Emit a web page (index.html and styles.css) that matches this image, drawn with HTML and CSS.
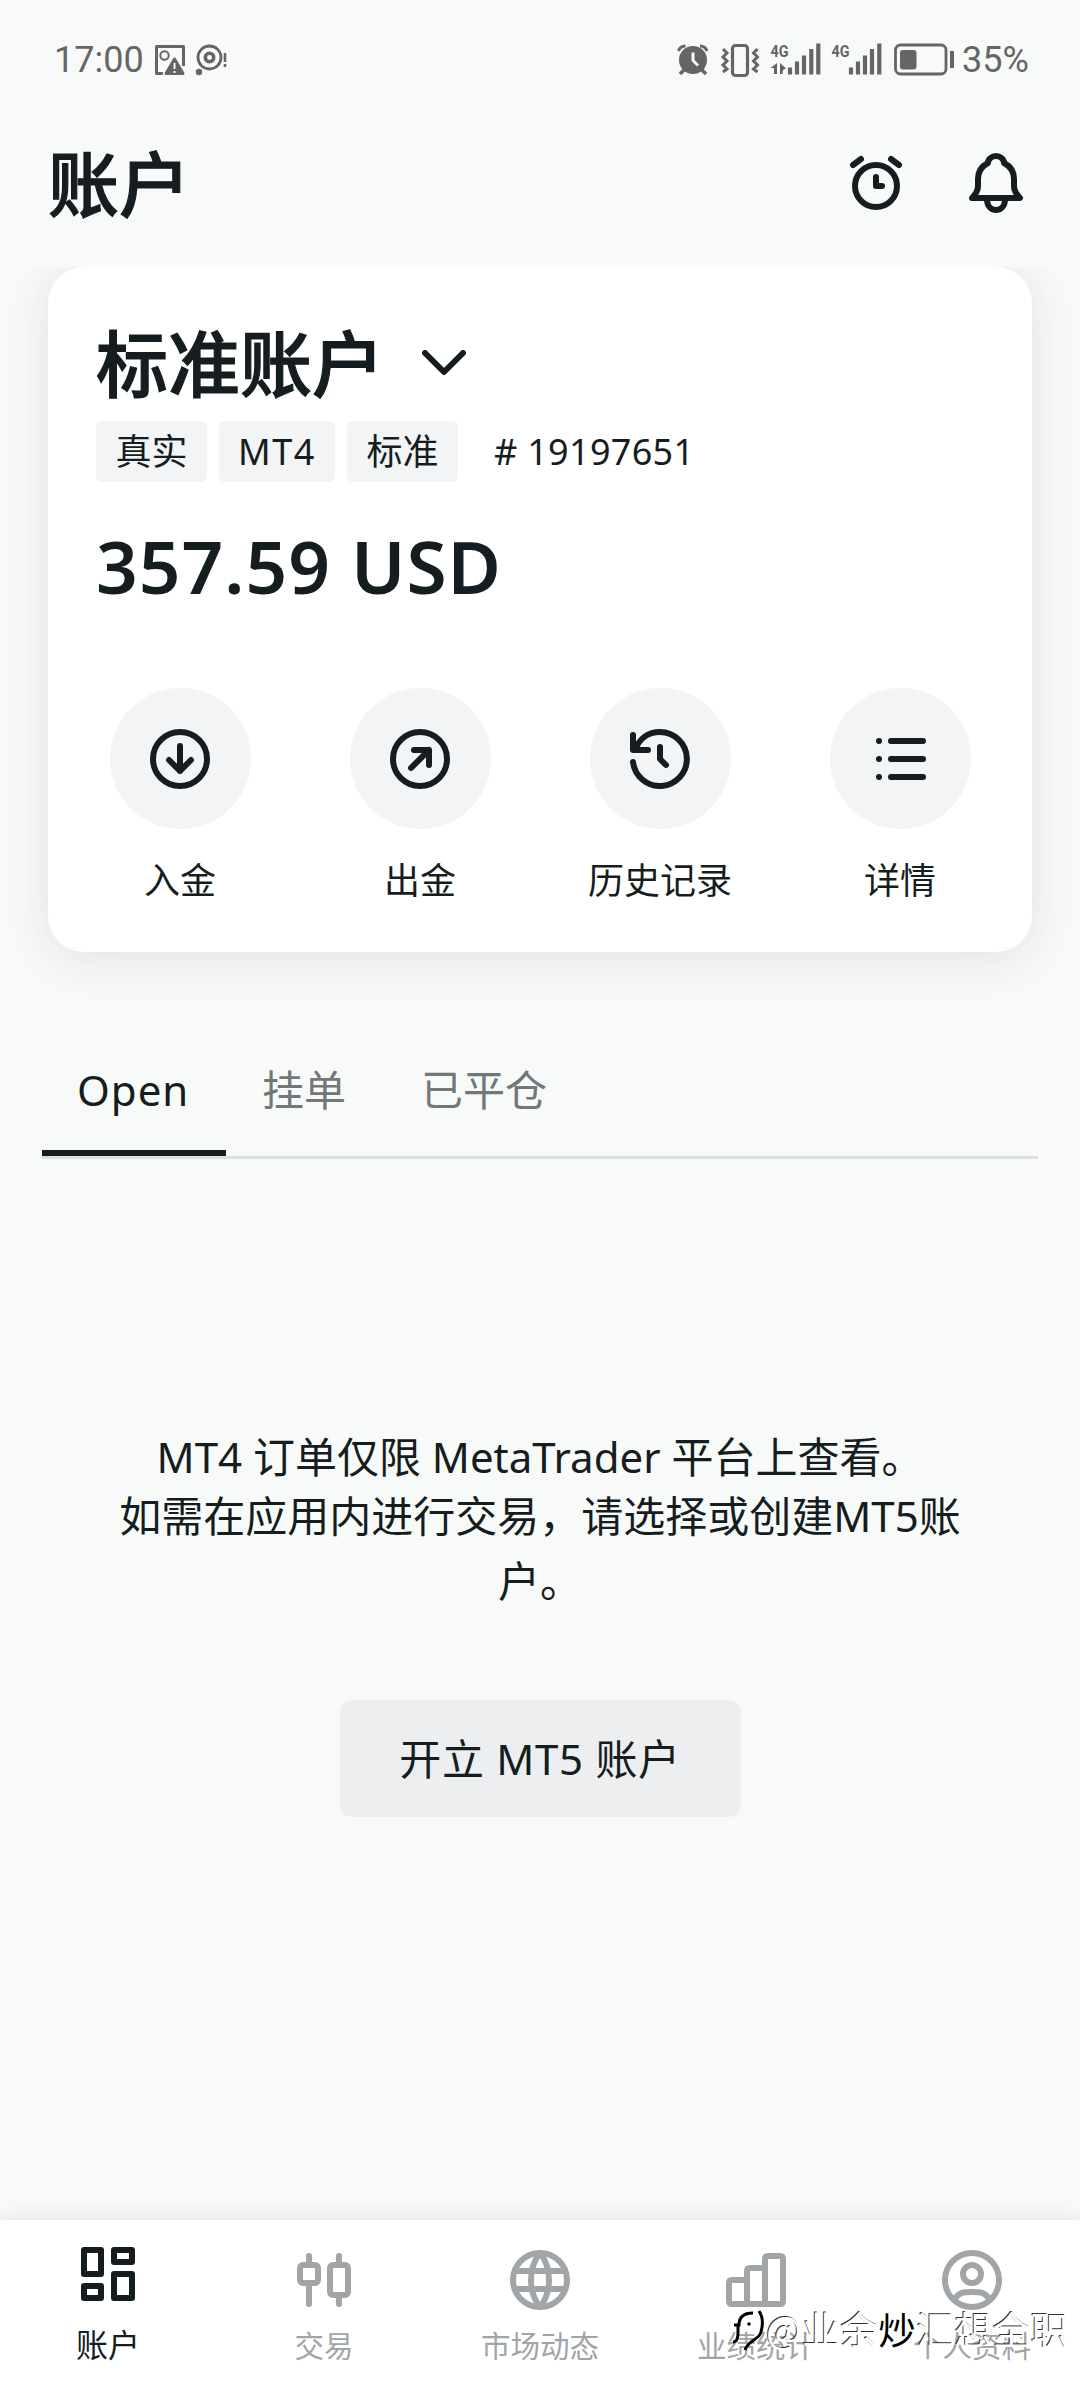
FILE: index.html
```html
<!DOCTYPE html>
<html lang="zh-CN">
<head>
<meta charset="utf-8">
<title>账户</title>
<link rel="stylesheet" href="styles.css">
</head>
<body>
<div class="app">
  <div class="status">
    <span class="time">17:00</span>
    <svg class="st-notes" width="76" height="32" viewBox="0 0 76 32">
      <path d="M7 29.500H2.500V2.500h27V22M9 29.500H7" fill="none" stroke="#646564" stroke-width="3" stroke-linejoin="round"/>
      <circle cx="10.500" cy="11.500" r="4.200" fill="none" stroke="#646564" stroke-width="2"/>
      <path d="M20.500 14.500L29 29.500H12Z" fill="#646564" stroke="#f8faf9" stroke-width="5"/>
      <path d="M20.500 15L29 29.500H12Z" fill="#646564" stroke="#646564" stroke-width="3" stroke-linejoin="round"/>
      <path d="M20.500 19v6M20.500 27v2" stroke="#f8faf9" stroke-width="2"/>
      <circle cx="55.500" cy="13.500" r="11.500" fill="none" stroke="#646564" stroke-width="2.800"/>
      <circle cx="55.500" cy="13.500" r="4.200" fill="none" stroke="#646564" stroke-width="3.600"/>
      <circle cx="45" cy="28" r="3.200" fill="#646564"/>
      <path d="M71 9v9M71 20v3" stroke="#646564" stroke-width="2.600"/>
    </svg>
    <svg class="st-system" width="280" height="36" viewBox="676 42 280 36">
      <g fill="none" stroke="#646564">
        <circle cx="693" cy="60" r="14" fill="#646564" stroke="none"/>
        <path d="M678.500 51c1-3 4-5 7-5M707 51c-1-3-4-5-7-5" stroke-width="3"/>
        <path d="M684 70l-4 4M702 70l4 4" stroke-width="3.500"/>
        <path d="M693 52.500v8l5 5" stroke="#f8faf9" stroke-width="3"/>
        <rect x="732.500" y="45.500" width="15" height="30" rx="3" stroke-width="3.200"/>
        <path d="M723 49l4 4-4 4 4 4-4 4 4 4-4 3M757.500 49l-4 4 4 4-4 4 4 4-4 4 4 3" stroke-width="3"/>
        <path d="M790 67.500v7M797 61.500v13M804 55.500v19M811.300 49v25.500M818.300 43.500v31M851 67.500v7M858 61.500v13M865 55.500v19M872 49v25.500M879.300 43.500v31" stroke-width="4.200"/>
        <rect x="895.500" y="45" width="50.500" height="29" rx="5" stroke-width="2.800"/>
        <path d="M952 51v17" stroke-width="4"/>
      </g>
      <path d="M777 63v11h-3v-6h-3.500zM780 63l6 5.500-3 1.500-.5 4H780z" fill="#646564"/>
      <rect x="900" y="50" width="16.500" height="19.500" rx="3" fill="#646564"/>
      <text x="770.500" y="57" class="net" textLength="18" lengthAdjust="spacingAndGlyphs">4G</text>
      <text x="831.500" y="57" class="net" textLength="18" lengthAdjust="spacingAndGlyphs">4G</text>
    </svg>
    <span class="pct">35%</span>
  </div>

  <header class="header">
    <h1>账户</h1>
    <svg class="ico" width="60" height="60" viewBox="0 0 60 60"><circle cx="30" cy="33" r="21"/><path d="M30 24v9h6M7 12l8-6M53 12l-8-6"/></svg>
    <svg class="ico" width="60" height="60" viewBox="0 0 60 60"><path d="M6 45c4-4 6-7 6-12V26c0-8 4-13 10-16 0-4 4-7 8-7s8 3 8 7c6 3 10 8 10 16v7c0 5 2 8 6 12zM21 46c0 7 4 11 9 11s9-4 9-11"/></svg>
  </header>

  <div class="card-zone">
    <section class="card">
      <div class="name"><h2>标准账户</h2><svg class="ico" width="44" height="26" viewBox="0 0 44 26"><path d="M3 3l19 19L41 3"/></svg></div>
      <div class="tags"><span class="tag">真实</span><span class="tag mt">MT4</span><span class="tag">标准</span><span class="num"># 19197651</span></div>
      <div class="amount">357.59 USD</div>
      <div class="actions">
        <div class="action"><i><svg class="ico" width="60" height="60" viewBox="0 0 60 60"><circle cx="30" cy="30" r="27"/><path d="M30 17v25M19 31l11 11 11-11"/></svg></i>入金</div>
        <div class="action"><i><svg class="ico" width="60" height="60" viewBox="0 0 60 60"><circle cx="30" cy="30" r="27"/><path d="M21 39l18-18M24 21h15v15"/></svg></i>出金</div>
        <div class="action"><i><svg class="ico" width="60" height="60" viewBox="0 0 60 60"><path d="M3 6v15h15M5 21C9 10 18 3 30 3a27 27 0 1 1-27 30M30 18v12l6 6"/></svg></i>历史记录</div>
        <div class="action"><i><svg class="ico" width="60" height="60" viewBox="0 0 60 60"><path d="M21 12h32M21 30h32M21 48h32M9 12h.01M9 30h.01M9 48h.01"/></svg></i>详情</div>
      </div>
    </section>
  </div>

  <nav class="tabs"><span class="tab on">Open</span><span class="tab">挂单</span><span class="tab">已平仓</span></nav>

  <main class="empty">
    <p class="l1">MT4 订单仅限 MetaTrader 平台上查看。</p>
    <p class="l2">如需在应用内进行交易，请选择或创建MT5账</p>
    <p class="l3">户。</p>
    <button class="open-btn">开立 MT5 账户</button>
  </main>

  <nav class="bottom">
    <div class="item on"><svg class="ico" width="60" height="60" viewBox="0 0 60 60"><rect x="6" y="6" width="17" height="24"/><rect x="36" y="6" width="18" height="12"/><rect x="6" y="42" width="17" height="12"/><rect x="36" y="30" width="18" height="24"/></svg>账户</div>
    <div class="item"><svg class="ico" width="60" height="60" viewBox="0 0 60 60"><rect x="6" y="15" width="18" height="18" rx="3"/><rect x="36" y="15" width="18" height="30" rx="3"/><path d="M15 6v9M15 33v21M45 6v9M45 45v9"/></svg>交易</div>
    <div class="item"><svg class="ico" width="60" height="60" viewBox="0 0 60 60"><circle cx="30" cy="30" r="27"/><path d="M5 21h50M5 39h50"/><path d="M30 3c-12 15-12 39 0 54M30 3c12 15 12 39 0 54"/></svg>市场动态</div>
    <div class="item"><svg class="ico" width="60" height="60" viewBox="0 0 60 60"><path d="M21 54H6q-3 0-3-3V33q0-3 3-3h15v24V21q0-3 3-3h15v36V9q0-3 3-3h12q3 0 3 3v42q0 3-3 3H21"/></svg>业绩统计</div>
    <div class="item"><svg class="ico" width="60" height="60" viewBox="0 0 60 60"><circle cx="30" cy="30" r="27"/><circle cx="30" cy="24" r="9"/><path d="M13 49c4-7 9-7 17-7s13 0 17 7"/></svg>个人资料</div>
  </nav>
  <div class="watermark">
    <svg width="34" height="46" viewBox="0 0 34 46">
      <path d="M2 17h5c0-8 5-12 14-12M6 17v8c0 7-2 9-5 9M27 3c4 6 4 14 2 21-2 8-13 8-16 18" fill="none" stroke="#000" stroke-width="3"/>
      <circle cx="17" cy="16" r="1.800"/>
    </svg>
    <span>@业余<b>炒</b>汇想全职</span>
  </div>
</div>
</body>
</html>
```
FILE: styles.css
```css
* { box-sizing: border-box; }
body { margin: 0; background: #f8faf9; }
.app {
  position: relative;
  width: 1080px;
  height: 2388px;
  display: flex;
  flex-direction: column;
  overflow: hidden;
  background: #f8faf9;
  color: #151d20;
  font-family: "Noto Sans", "Noto Sans CJK SC", sans-serif;
  font-size: 36px;
}
h1, h2, p { margin: 0; font-weight: 400; }
svg { display: block; flex: none; }
.ico { fill: none; stroke: currentColor; stroke-width: 6; stroke-linecap: round; stroke-linejoin: round; }

.status { height: 120px; padding: 0 50px 0 54px; display: flex; align-items: center; color: #646564; font-family: Roboto, sans-serif; font-size: 36px; line-height: 40px; }
.time { width: 100px; }
.st-system { margin-left: auto; }
.pct { width: 74px; padding-left: 6px; }
.net { font: 700 17px Roboto, sans-serif; fill: #646564; }

.header { height: 147px; padding: 0 54px 22px 48px; display: flex; align-items: center; gap: 60px; }
h1 { flex: 1; padding-bottom: 6px; font: 500 71px/96px "Noto Sans CJK SC", sans-serif; -webkit-text-stroke: 1.2px; }

.card-zone { height: 775px; padding: 0 48px; overflow: hidden; }
.card { height: 685px; padding: 48px; border-radius: 36px; background: #fff; box-shadow: 0 6px 48px rgba(40,60,55,.12); }
.name { height: 96px; display: flex; align-items: center; gap: 38px; }
h2 { padding-bottom: 7px; font: 500 72px/89px "Noto Sans CJK SC", sans-serif; -webkit-text-stroke: 1.2px; }
.tags { height: 61px; margin-top: 10px; display: flex; gap: 12px; line-height: 62px; }
.tag { width: 111px; text-align: center; background: #f3f4f6; border-radius: 6px; }
.tag.mt { width: 116px; letter-spacing: 1.5px; }
.num { margin-left: 24px; letter-spacing: .3px; }
.amount { height: 100px; margin-top: 36px; font-size: 73px; line-height: 96px; font-weight: 600; letter-spacing: 1px; }
.actions { margin: 70px -36px 0; display: grid; grid-template-columns: repeat(4, 240px); }
.action { display: flex; flex-direction: column; align-items: center; line-height: 52px; gap: 26px; }
.action i { width: 141px; height: 141px; border-radius: 50%; background: #f3f4f6; display: grid; place-items: center; }

.tabs { height: 117px; margin: 0 42px; display: flex; border-bottom: 3px solid #dcdfdf; font-size: 42px; line-height: 96px; color: #72777a; }
.tab { padding: 0 39px 0 36px; }
.tab.on { width: 184px; padding: 0 0 0 35px; letter-spacing: 1px; color: #151d20; border-bottom: 6px solid #151d20; }

.empty { flex: 1; padding-top: 268px; display: flex; flex-direction: column; align-items: center; font-size: 42px; line-height: 60px; }
.l2 { line-height: 58px; }
.l3 { line-height: 72px; }
.open-btn { width: 401px; height: 117px; margin-top: 83px; padding: 0; border: 0; border-radius: 12px; background: #edeef0; color: inherit; font: inherit; letter-spacing: .7px; }

.bottom { height: 168px; display: grid; grid-template-columns: repeat(5, 1fr); background: #fff; box-shadow: 0 0 18px rgba(40,60,55,.14); }
.item { padding-top: 30px; display: flex; flex-direction: column; align-items: center; gap: 16px; color: #a1a5a8; font-size: 29.5px; line-height: 40px; }
.item.on { padding-top: 24px; gap: 21px; color: #151d20; font-size: 32px; }

.watermark { position: absolute; left: 732px; top: 2308px; display: flex; font: 37.500px/40px "Noto Sans CJK SC", sans-serif; letter-spacing: .6px; color: #fff; text-shadow: -1px -1px 0 #333; }
.watermark b { font-weight: 400; color: #000; text-shadow: -1px -1px 0 #fff; }
```
